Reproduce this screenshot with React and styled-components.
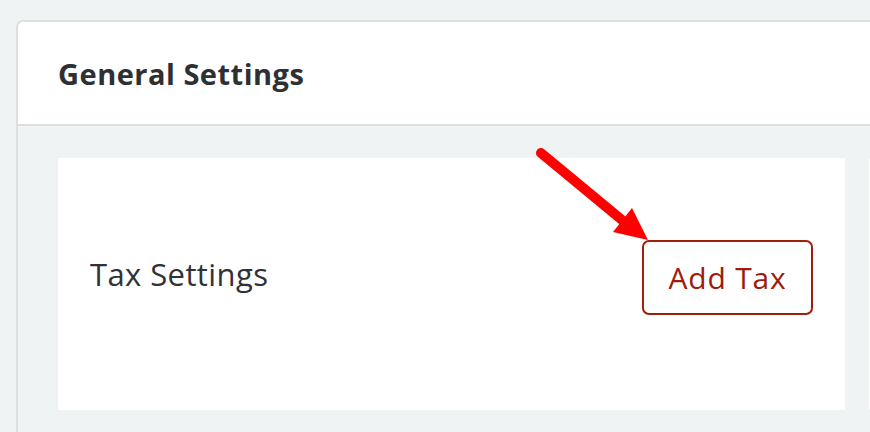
import React from "react";
import styled, { createGlobalStyle } from "styled-components";

const Global = createGlobalStyle`
  html, body { margin: 0; padding: 0; }
  body {
    background: #f0f3f4;
    font-family: "Open Sans", "Noto Sans", sans-serif;
    overflow: hidden;
    width: 870px;
    height: 432px;
  }
`;

const Page = styled.div`
  padding: 20px 0 0 16px;
  width: 854px;
  height: 412px;
  overflow: hidden;
`;

const Card = styled.section`
  width: 1660px;
  border: 2px solid #dcdedf;
  border-radius: 7px 7px 0 0;
  background: #f0f3f4;
`;

const Header = styled.header`
  background: #ffffff;
  border-radius: 5px 5px 0 0;
  height: 102px;
  border-bottom: 2px solid #dcdedf;
  display: flex;
  align-items: center;
  padding: 0 40px;
`;

const Title = styled.h2`
  margin: 0;
  font-size: 29px;
  font-weight: 700;
  color: #2e3033;
  letter-spacing: 0.5px;
`;

const Body = styled.div`
  display: grid;
  grid-template-columns: 787px 787px;
  gap: 24px;
  padding: 32px 40px 40px;
`;

const Panel = styled.div`
  background: #ffffff;
  padding: 82px 32px 95px 32px;
  display: flex;
  align-items: center;
  justify-content: space-between;
  min-height: 75px;
`;

const Label = styled.span`
  font-size: 31px;
  color: #313235;
  letter-spacing: 0.4px;
  margin-bottom: 8px;
`;

const ButtonWrap = styled.div`
  position: relative;
`;

const Button = styled.button`
  font-family: "Open Sans", "Noto Sans", sans-serif;
  width: 171px;
  height: 75px;
  border: 2px solid #a11d0d;
  border-radius: 7px;
  background: #ffffff;
  color: #9d1c0c;
  font-size: 30px;
  letter-spacing: 0.8px;
  padding: 0;
  cursor: pointer;
`;

const Arrow = styled.svg`
  position: absolute;
  left: -112px;
  top: -95px;
  width: 122px;
  height: 99px;
  overflow: visible;
`;

export default function App() {
  return (
    <>
      <Global />
      <Page>
        <Card>
          <Header>
            <Title>General Settings</Title>
          </Header>
          <Body>
            <Panel>
              <Label>Tax Settings</Label>
              <ButtonWrap>
                <Button>Add Tax</Button>
                <Arrow viewBox="0 0 122 99">
                  <line x1="11" y1="8" x2="92" y2="75" stroke="#ff0000" strokeWidth="10" strokeLinecap="round" />
                  <polygon points="118,95 83,87 102,63" fill="#ff0000" />
                </Arrow>
              </ButtonWrap>
            </Panel>
            <Panel />
          </Body>
        </Card>
      </Page>
    </>
  );
}
